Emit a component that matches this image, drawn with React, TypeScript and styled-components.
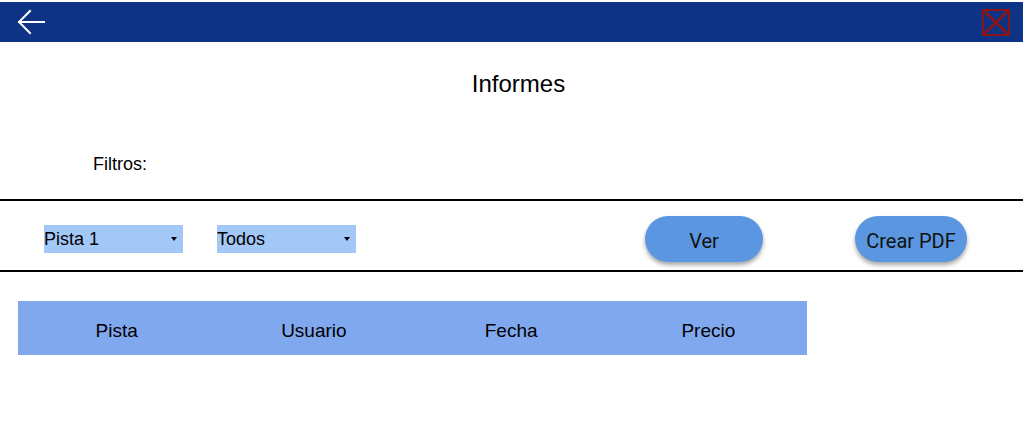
import React from "react";
import styled, { createGlobalStyle } from "styled-components";

const Global = createGlobalStyle`
  html, body { margin: 0; padding: 0; background: #fff; }
  body { font-family: "Liberation Sans", Arial, sans-serif; color: #000; }
`;

const Page = styled.div`
  width: 1023px;
  padding-top: 2px;
`;

const Header = styled.header`
  height: 40px;
  background: #0f3384;
  display: flex;
  align-items: center;
  justify-content: space-between;
  padding: 0 13px 0 17px;
`;

const IconButton = styled.button`
  background: none;
  border: 0;
  padding: 0;
  display: flex;
  cursor: pointer;
`;

const Title = styled.h1`
  margin: 0;
  padding-top: 27px;
  height: 30px;
  text-align: center;
  font-weight: 400;
  font-size: 24px;
  line-height: 30px;
  padding-left: 14px;
`;

const FilterLabel = styled.div`
  padding-left: 93px;
  margin-top: 55px;
  font-size: 18px;
  line-height: 20px;
`;

const Rule = styled.hr`
  margin: 0;
  border: 0;
  height: 2px;
  background: #000;
`;

const TopRule = styled(Rule)`
  margin-top: 25px;
`;

const FilterRow = styled.div`
  height: 69px;
  box-sizing: border-box;
  padding-top: 7px;
  display: flex;
  align-items: center;
  padding-left: 44px;
`;

const SelectWrap = styled.div`
  position: relative;
  width: 139px;
  height: 28px;
  margin-right: 34px;
`;

const Select = styled.select`
  appearance: none;
  -webkit-appearance: none;
  width: 100%;
  height: 100%;
  border: 0;
  border-radius: 0;
  background: #a3c8f7;
  font-family: "Liberation Sans", Arial, sans-serif;
  font-size: 18px;
  color: #000;
  padding: 0;
  outline: none;
`;

const Caret = styled.span`
  position: absolute;
  right: 6px;
  top: 12px;
  width: 0;
  height: 0;
  border-left: 3.5px solid transparent;
  border-right: 3.5px solid transparent;
  border-top: 4px solid #000;
  pointer-events: none;
`;

const PillButton = styled.button<{ $w: number; $ml: number }>`
  width: ${(p) => p.$w}px;
  height: 46px;
  margin-left: ${(p) => p.$ml}px;
  border: 0;
  border-radius: 23px;
  background: #5b97e0;
  box-shadow: 0 3px 4px rgba(0, 0, 0, 0.35);
  font-family: Roboto, "Liberation Sans", sans-serif;
  font-size: 20px;
  color: #111;
  padding: 0;
  padding-top: 3px;
  cursor: pointer;
`;

const Table = styled.div`
  margin: 29px 0 0 18px;
  width: 789px;
  height: 54px;
  background: #80a8ef;
  display: grid;
  grid-template-columns: repeat(4, 1fr);
  align-items: center;
`;

const HeadCell = styled.div`
  text-align: center;
  font-size: 19px;
  padding-top: 5px;
`;

export default function App() {
  return (
    <Page>
      <Global />
      <Header>
        <IconButton aria-label="Volver">
          <svg width="28" height="26" viewBox="0 0 28 26" fill="none" stroke="#fff" strokeWidth="2" strokeLinecap="square">
            <path d="M2 13 H27" />
            <path d="M13 2 L2 13 L13 24" />
          </svg>
        </IconButton>
        <IconButton aria-label="Cerrar">
          <svg width="28" height="27" viewBox="0 0 28 27" fill="none" stroke="#8a1515" strokeWidth="2">
            <rect x="1" y="1" width="26" height="25" />
            <path d="M1 1 L27 26 M27 1 L1 26" strokeWidth="2.5" />
          </svg>
        </IconButton>
      </Header>
      <Title>Informes</Title>
      <FilterLabel>Filtros:</FilterLabel>
      <TopRule />
      <FilterRow>
        <SelectWrap>
          <Select defaultValue="Pista 1">
            <option>Pista 1</option>
            <option>Pista 2</option>
          </Select>
          <Caret />
        </SelectWrap>
        <SelectWrap>
          <Select defaultValue="Todos">
            <option>Todos</option>
          </Select>
          <Caret />
        </SelectWrap>
        <PillButton $w={118} $ml={255}>Ver</PillButton>
        <PillButton $w={112} $ml={92}>Crear PDF</PillButton>
      </FilterRow>
      <Rule />
      <Table>
        <HeadCell>Pista</HeadCell>
        <HeadCell>Usuario</HeadCell>
        <HeadCell>Fecha</HeadCell>
        <HeadCell>Precio</HeadCell>
      </Table>
    </Page>
  );
}
